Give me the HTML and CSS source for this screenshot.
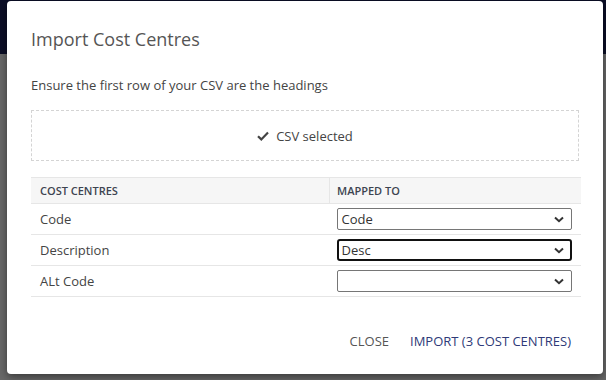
FILE: index.html
```html
<!DOCTYPE html>
<html lang="en">
<head>
    <meta charset="UTF-8">
    <meta name="viewport" content="width=device-width, initial-scale=1.0">
    <title>Import Cost Centres</title>
    <link rel="stylesheet" href="styles.css">
</head>
<body>
<div class="topbar"></div>
<div class="page"></div>

<div class="modal">
    <h2 class="modal-title">Import Cost Centres</h2>
    <p class="hint">Ensure the first row of your CSV are the headings</p>

    <div class="dropzone">
        <svg class="check" width="12" height="10" viewBox="0 0 12 10">
            <path d="M1 5.2 L4.3 8.4 L11 1.6" fill="none" stroke="#444" stroke-width="2.2"/>
        </svg>
        CSV selected
    </div>

    <table class="mapping">
        <thead>
        <tr>
            <th class="col-name">Cost Centres</th>
            <th>Mapped To</th>
        </tr>
        </thead>
        <tbody>
        <tr>
            <td>Code</td>
            <td>
                <div class="select">
                    <span>Code</span>
                    <svg class="chevron" width="10" height="7" viewBox="0 0 10 7"><path d="M1 1.5 L5 5.2 L9 1.5" fill="none" stroke="#333" stroke-width="2"/></svg>
                </div>
            </td>
        </tr>
        <tr>
            <td>Description</td>
            <td>
                <div class="select focused">
                    <span>Desc</span>
                    <svg class="chevron" width="10" height="7" viewBox="0 0 10 7"><path d="M1 1.5 L5 5.2 L9 1.5" fill="none" stroke="#333" stroke-width="2"/></svg>
                </div>
            </td>
        </tr>
        <tr>
            <td>ALt Code</td>
            <td>
                <div class="select">
                    <span></span>
                    <svg class="chevron" width="10" height="7" viewBox="0 0 10 7"><path d="M1 1.5 L5 5.2 L9 1.5" fill="none" stroke="#333" stroke-width="2"/></svg>
                </div>
            </td>
        </tr>
        </tbody>
    </table>

    <div class="actions">
        <a class="btn btn-close">Close</a>
        <a class="btn btn-import">Import (3 Cost Centres)</a>
    </div>
</div>
</body>
</html>
```

FILE: styles.css
```css
body {
    margin: 0;
    font-family: "Open Sans", "Liberation Sans", sans-serif;
    background-color: #686868;
    height: 380px;
    overflow: hidden;
}
.topbar {
    height: 54px;
    background-color: #0b0e26;
}
.page {
    height: 326px;
}
.modal {
    position: absolute;
    left: 7px;
    top: 1px;
    width: 596px;
    height: 373px;
    box-sizing: border-box;
    padding: 24px 24px 0 24px;
    background: #fff;
    border-radius: 4px;
    box-shadow: 0 3px 8px rgba(0,0,0,0.45);
}
.modal-title {
    margin: 0;
    font-size: 18px;
    font-weight: 400;
    line-height: 28px;
    color: #555;
}
.hint {
    margin: 22px 0 0 0;
    font-size: 13px;
    line-height: 20px;
    color: #444;
}
.dropzone {
    margin-top: 15px;
    height: 51px;
    box-sizing: border-box;
    border: 1px dashed #d4d4d4;
    display: flex;
    align-items: center;
    justify-content: center;
    gap: 7px;
    font-size: 13px;
    color: #444;
}
.mapping {
    width: 550px;
    margin-top: 16px;
    border-collapse: collapse;
    font-size: 13px;
    color: #444;
}
.mapping th {
    height: 25px;
    padding: 0 7px;
    text-align: left;
    font-size: 11px;
    font-weight: 600;
    text-transform: uppercase;
    color: #3d4450;
    background-color: #f6f6f6;
    border-top: 1px solid #e6e6e6;
    border-bottom: 1px solid #e6e6e6;
}
.mapping th.col-name {
    width: 282px;
    padding-left: 9px;
    border-right: 1px solid #e6e6e6;
}
.mapping td {
    height: 30px;
    padding: 0 7px;
    border-bottom: 1px solid #e6e6e6;
}
.mapping td:first-child {
    padding-left: 9px;
}
.select {
    width: 235px;
    height: 22px;
    box-sizing: border-box;
    border: 1px solid #767676;
    border-radius: 2px;
    display: flex;
    align-items: center;
    justify-content: space-between;
    padding: 0 7px 0 4px;
    font-size: 13px;
    color: #333;
}
.select.focused {
    border: 2px solid #111;
    border-radius: 3px;
    padding: 0 6px 0 3px;
}
.actions {
    display: flex;
    justify-content: flex-end;
    gap: 21px;
    margin-top: 34px;
    padding-right: 8px;
}
.btn {
    font-size: 13px;
    line-height: 20px;
    text-transform: uppercase;
    cursor: pointer;
}
.btn-close {
    color: #555;
}
.btn-import {
    color: #2f3a78;
}
```
